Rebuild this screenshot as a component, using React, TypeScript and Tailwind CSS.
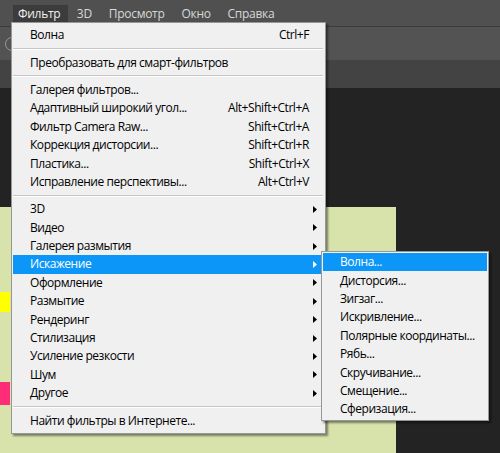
import React from "react";

type Item =
  | { kind: "item"; label: string; shortcut?: string; sub?: boolean; active?: boolean }
  | { kind: "sep" };

const mainItems: Item[] = [
  { kind: "item", label: "Волна", shortcut: "Ctrl+F" },
  { kind: "sep" },
  { kind: "item", label: "Преобразовать для смарт-фильтров" },
  { kind: "sep" },
  { kind: "item", label: "Галерея фильтров..." },
  { kind: "item", label: "Адаптивный широкий угол...", shortcut: "Alt+Shift+Ctrl+A" },
  { kind: "item", label: "Фильтр Camera Raw...", shortcut: "Shift+Ctrl+A" },
  { kind: "item", label: "Коррекция дисторсии...", shortcut: "Shift+Ctrl+R" },
  { kind: "item", label: "Пластика...", shortcut: "Shift+Ctrl+X" },
  { kind: "item", label: "Исправление перспективы...", shortcut: "Alt+Ctrl+V" },
  { kind: "sep" },
  { kind: "item", label: "3D", sub: true },
  { kind: "item", label: "Видео", sub: true },
  { kind: "item", label: "Галерея размытия", sub: true },
  { kind: "item", label: "Искажение", sub: true, active: true },
  { kind: "item", label: "Оформление", sub: true },
  { kind: "item", label: "Размытие", sub: true },
  { kind: "item", label: "Рендеринг", sub: true },
  { kind: "item", label: "Стилизация", sub: true },
  { kind: "item", label: "Усиление резкости", sub: true },
  { kind: "item", label: "Шум", sub: true },
  { kind: "item", label: "Другое", sub: true },
  { kind: "sep" },
  { kind: "item", label: "Найти фильтры в Интернете..." },
];

const subItems = [
  "Волна...",
  "Дисторсия...",
  "Зигзаг...",
  "Искривление...",
  "Полярные координаты...",
  "Рябь...",
  "Скручивание...",
  "Смещение...",
  "Сферизация...",
];

const font = { fontFamily: '"Open Sans", "Noto Sans", Arial, sans-serif' };

function Arrow({ white }: { white?: boolean }) {
  return (
    <svg width="4" height="7" viewBox="0 0 4 7" className="shrink-0">
      <path d="M0 0 L4 3.5 L0 7 Z" fill={white ? "#ffffff" : "#000000"} />
    </svg>
  );
}

function MainMenu() {
  return (
    <div
      className="absolute left-[11px] top-[22px] w-[315px] bg-[#f0f0f0] border border-[#979797] py-[3px] shadow-[2px_2px_2px_rgba(0,0,0,0.45)] text-[12px] tracking-[-0.45px] text-black"
      style={font}
    >
      {mainItems.map((it, i) =>
        it.kind === "sep" ? (
          <div key={i} className="h-[9px] flex items-center ml-[1px] mr-[2px]">
            <div className="w-full border-t border-[#c6c6c6] border-b border-b-white" />
          </div>
        ) : (
          <div
            key={i}
            className={
              "h-[18.4px] flex items-center ml-[1px] mr-[4px] pl-[17px] pr-[4px] " +
              (it.active ? "bg-[#0c96f8] text-white" : "")
            }
          >
            <span className="flex-1 whitespace-nowrap">{it.label}</span>
            {it.shortcut && <span className="whitespace-nowrap pr-[8px]">{it.shortcut}</span>}
            {it.sub && <Arrow white={it.active} />}
          </div>
        )
      )}
    </div>
  );
}

function SubMenu() {
  return (
    <div
      className="absolute left-[321px] top-[251px] w-[168px] bg-[#f0f0f0] border border-[#979797] p-[1px] shadow-[2px_2px_2px_rgba(0,0,0,0.45)] text-[12px] tracking-[-0.45px] text-black"
      style={font}
    >
      {subItems.map((s, i) => (
        <div
          key={s}
          className={
            "h-[18.4px] flex items-center pl-[17px] whitespace-nowrap " +
            (i === 0 ? "bg-[#0c96f8] text-white" : "")
          }
        >
          {s}
        </div>
      ))}
    </div>
  );
}

export default function App() {
  const tabs = ["Фильтр", "3D", "Просмотр", "Окно", "Справка"];
  return (
    <div className="relative w-[500px] h-[453px] overflow-hidden bg-[#232323]" style={font}>
      {/* menu bar */}
      <div className="h-[27px] bg-[#505050] border-b border-[#3a3a3a] flex items-start pt-[5px] text-[12px] tracking-[-0.3px] text-[#d8d8d8]">
        <div className="flex ml-[13px]">
          {tabs.map((t, i) => (
            <div
              key={t}
              className={
                "h-[17px] flex items-center " +
                (i === 0 ? "bg-[#3c3c3c] text-[#f0f0f0] pl-[5px] pr-[8px]" : "px-[8.5px]")
              }
            >
              {t}
            </div>
          ))}
        </div>
      </div>
      {/* options bar */}
      <div className="h-[33px] bg-[#535353] flex items-center pl-[5px]">
        <div className="w-[14px] h-[14px] rounded-full border border-[#9a9a9a]" />
      </div>
      <div className="h-[28px] bg-[#434343]" />
      {/* workspace */}
      <div className="pt-[119px]">
        <div className="w-[396px] h-[246px] bg-[#d8e3ab] flex flex-col">
          <div className="w-[10px] h-[20px] mt-[85px] bg-[#ffff00]" />
          <div className="w-[10px] h-[23px] mt-[70px] bg-[#ff2d78]" />
        </div>
      </div>
      <MainMenu />
      <SubMenu />
    </div>
  );
}
